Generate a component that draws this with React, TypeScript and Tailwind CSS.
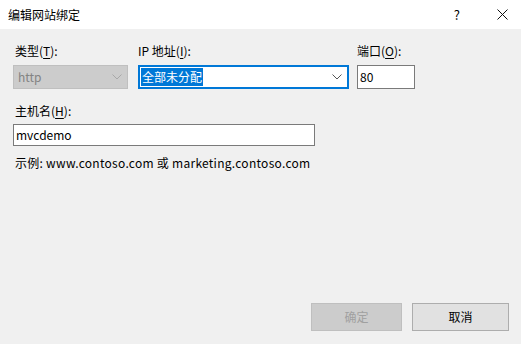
import React from "react";

const font = { fontFamily: '"Noto Sans CJK SC", "Noto Sans", sans-serif' };

function Chevron({ color }: { color: string }) {
  return (
    <svg width="10" height="6" viewBox="0 0 10 6" fill="none">
      <path d="M0.5 0.5 L5 5 L9.5 0.5" stroke={color} strokeWidth="1" />
    </svg>
  );
}

function Label({ text, accel, after }: { text: string; accel: string; after: string }) {
  return (
    <div className="h-[16px] leading-[16px] text-[12px] text-black">
      {text}(<span className="underline underline-offset-2">{accel}</span>){after}
    </div>
  );
}

export default function App() {
  return (
    <div
      className="w-[521px] h-[344px] bg-[#f0f0f0] flex flex-col overflow-hidden"
      style={font}
    >
      <div className="h-[29px] bg-white flex items-center pl-[8px] pr-[13px] text-[12px] text-black">
        <span className="leading-[16px]">编辑网站绑定</span>
        <span className="ml-auto mr-[37px] text-[13px]">?</span>
        <svg width="11" height="11" viewBox="0 0 11 11" fill="none">
          <path d="M0.5 0.5 L10.5 10.5 M10.5 0.5 L0.5 10.5" stroke="#111" strokeWidth="1" />
        </svg>
      </div>

      <div className="flex flex-col px-[13px] pt-[14px]">
        <div className="flex gap-[10px]">
          <div className="flex flex-col gap-[6px] w-[115px]">
            <div className="pl-[2px]">
              <Label text="类型" accel="T" after=":" />
            </div>
            <div className="h-[24px] bg-[#cccccc] border border-[#bfbfbf] flex items-center pl-[4px] pr-[5px] text-[12px] text-[#838383]">
              <span>http</span>
              <span className="ml-auto">
                <Chevron color="#a8a8a8" />
              </span>
            </div>
          </div>
          <div className="flex flex-col gap-[6px] w-[211px]">
            <Label text="IP 地址" accel="I" after=":" />
            <div className="h-[24px] bg-white border-2 border-[#0078d7] flex items-center pl-[1px] pr-[5px] text-[12px]">
              <span className="bg-[#0078d7] text-white leading-[18px] px-[1px]">全部未分配</span>
              <span className="ml-auto">
                <Chevron color="#555555" />
              </span>
            </div>
          </div>
          <div className="flex flex-col gap-[6px] w-[58px] ml-[-2px]">
            <Label text="端口" accel="O" after=":" />
            <div className="h-[24px] bg-white border border-[#7a7a7a] flex items-center pl-[2px] text-[12px] text-black">
              80
            </div>
          </div>
        </div>

        <div className="pl-[2px] mt-[14px]">
          <Label text="主机名" accel="H" after=":" />
        </div>
        <div className="mt-[5px] w-[302px] h-[22px] bg-white border border-[#7a7a7a] flex items-center pl-[2px] text-[12px] text-black">
          mvcdemo
        </div>
        <div className="pl-[2px] mt-[9px] h-[16px] leading-[16px] text-[12px] text-black tracking-[0.27px]">
          示例: www.contoso.com 或 marketing.contoso.com
        </div>
      </div>

      <div className="mt-auto flex justify-end gap-[10px] pr-[12px] pb-[13px]">
        <button className="w-[91px] h-[28px] bg-[#cccccc] border border-[#bfbfbf] text-[12px] text-[#a0a0a0]">
          确定
        </button>
        <button className="w-[97px] h-[28px] bg-[#e1e1e1] border border-[#adadad] text-[12px] text-black">
          取消
        </button>
      </div>
    </div>
  );
}
